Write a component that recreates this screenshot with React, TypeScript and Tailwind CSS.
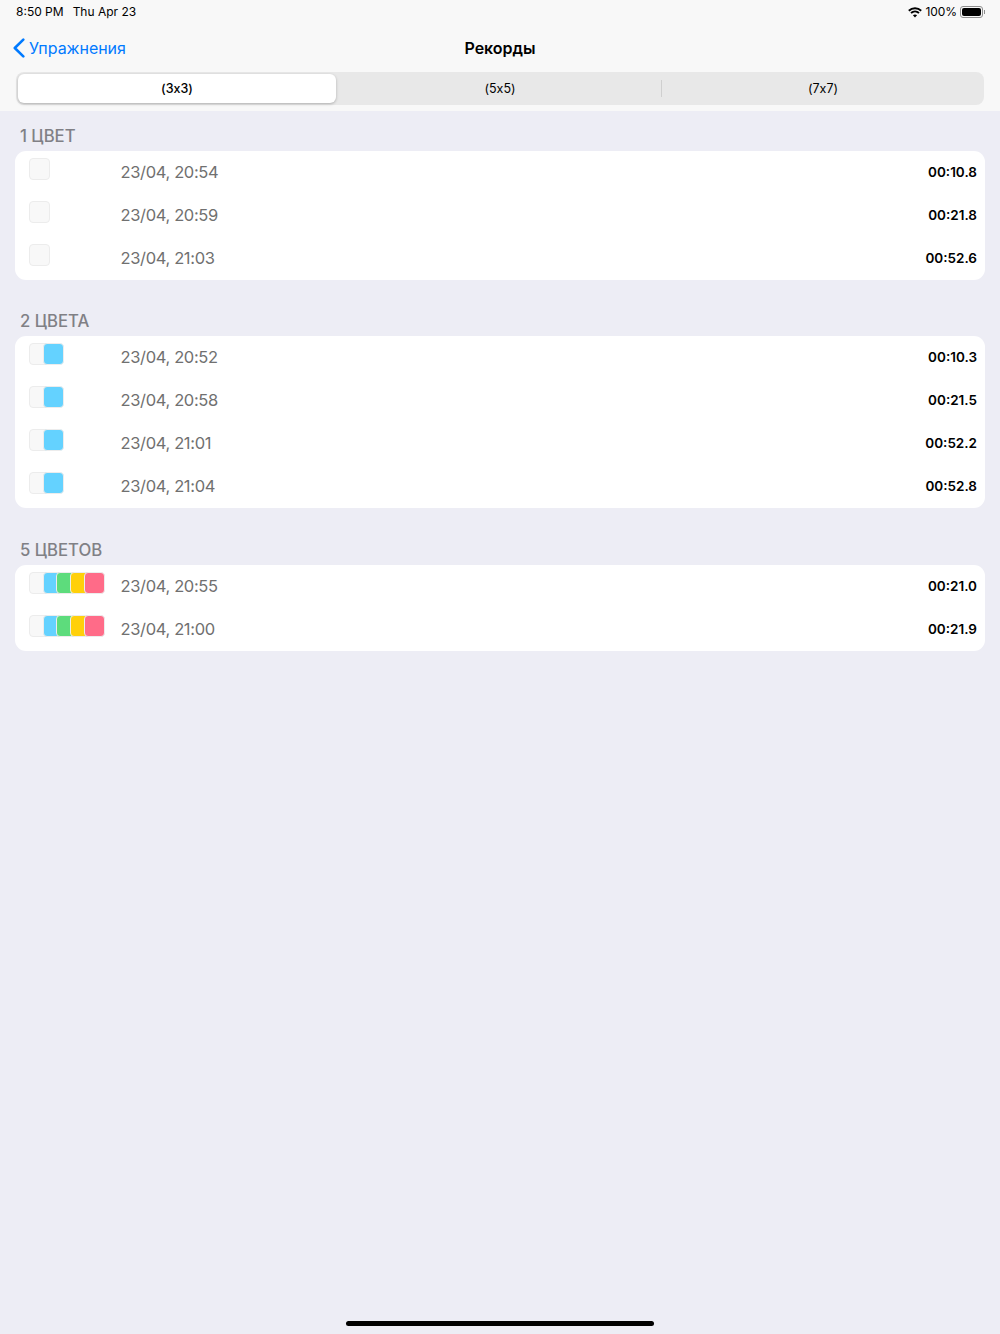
import React from 'react';

const GRAY = 'bg-[#f8f8f8]';
const BLUE = 'bg-[#64d2ff]';
const GREEN = 'bg-[#5ddc7c]';
const YELLOW = 'bg-[#ffd00a]';
const PINK = 'bg-[#ff6b88]';

interface Row {
    date: string;
    time: string;
}

interface Section {
    title: string;
    colors: string[];
    rows: Row[];
}

const sections: Section[] = [
    {
        title: '1 ЦВЕТ',
        colors: [GRAY],
        rows: [
            { date: '23/04, 20:54', time: '00:10.8' },
            { date: '23/04, 20:59', time: '00:21.8' },
            { date: '23/04, 21:03', time: '00:52.6' }
        ]
    },
    {
        title: '2 ЦВЕТА',
        colors: [GRAY, BLUE],
        rows: [
            { date: '23/04, 20:52', time: '00:10.3' },
            { date: '23/04, 20:58', time: '00:21.5' },
            { date: '23/04, 21:01', time: '00:52.2' },
            { date: '23/04, 21:04', time: '00:52.8' }
        ]
    },
    {
        title: '5 ЦВЕТОВ',
        colors: [GRAY, BLUE, GREEN, YELLOW, PINK],
        rows: [
            { date: '23/04, 20:55', time: '00:21.0' },
            { date: '23/04, 21:00', time: '00:21.9' }
        ]
    }
];

const Swatches: React.FC<{ colors: string[] }> = ({ colors }) => (
    <div className="flex w-[91.5px] shrink-0 pt-[7px] self-start">
        {colors.map((color, i) => (
            <div
                key={i}
                className={`w-[21px] h-[22px] shrink-0 rounded-[4px] border border-[#ececec] first:ml-0 -ml-[7.3px] ${color}`}
            />
        ))}
    </div>
);

const WifiIcon = () => (
    <svg width="14" height="11" viewBox="0 0 14 11" fill="none" stroke="#000" strokeWidth="1.9">
        <path d="M0.8 3.7C4.3 0.4 9.7 0.4 13.2 3.7" />
        <path d="M3 6C5.3 3.9 8.7 3.9 11 6" />
        <path d="M7 10.6L4.9 8.2C6.1 7.2 7.9 7.2 9.1 8.2Z" fill="#000" stroke="none" />
    </svg>
);

const BatteryIcon = () => (
    <div className="flex items-center">
        <div className="w-[23px] h-[12px] rounded-[3px] border border-[#8e8e8e] p-[1px]">
            <div className="w-full h-full rounded-[2px] bg-black" />
        </div>
        <div className="w-[1px] h-[4px] bg-[#8e8e8e] ml-[1px]" />
    </div>
);

const StatusBar = () => (
    <div className="h-6 flex items-center justify-between pl-4 pr-[15px] text-[12px] leading-none text-black">
        <div className="flex gap-[9px]">
            <span>8:50 PM</span>
            <span>Thu Apr 23</span>
        </div>
        <div className="flex items-center gap-[3px]">
            <WifiIcon />
            <span className="tracking-[-0.05px]">100%</span>
            <BatteryIcon />
        </div>
    </div>
);

const NavBar = () => (
    <div className="relative h-12 flex items-center justify-center">
        <div className="absolute left-[13px] top-[14px] flex items-center gap-[4px] text-[#007aff]">
            <svg width="12" height="20" viewBox="0 0 12 20" fill="none" stroke="#007aff" strokeWidth="2.6" strokeLinecap="round" strokeLinejoin="round">
                <path d="M10.3 1.6L1.8 10L10.3 18.4" />
            </svg>
            <span className="text-[16px] leading-5 tracking-[-0.05px]">Упражнения</span>
        </div>
        <span className="text-[16px] font-semibold text-black">Рекорды</span>
    </div>
);

const SegmentedControl = () => (
    <div className="mx-4 h-[33px] rounded-[8px] bg-[#e8e8e8] flex items-center p-[2px] text-[12.5px] leading-5 text-black [font-feature-settings:'calt'_0]">
        <div className="w-[318px] h-[29px] rounded-[6px] bg-white shadow-[0_1px_3px_rgba(0,0,0,0.25)] flex items-center justify-center pt-px font-medium">
            (3x3)
        </div>
        <div className="flex-1 flex items-center justify-center pl-[3px] pt-px">(5x5)</div>
        <div className="w-px h-[17px] bg-[#cfcfcf]" />
        <div className="w-[320px] flex items-center justify-center pl-[2px] pt-px">(7x7)</div>
    </div>
);

const RecordSection: React.FC<{ section: Section }> = ({ section }) => (
    <div className="last:mt-px">
        <div className="h-[40px] pl-5 flex items-end pb-[5px] text-[16.7px] leading-5 font-medium text-[#808085]">
            {section.title}
        </div>
        <div className="mx-[15px] rounded-[11px] bg-white">
            {section.rows.map(row => (
                <div key={row.date} className="h-[43px] flex items-center pl-[14px] pr-2">
                    <Swatches colors={section.colors} />
                    <span className="flex-1 text-[16.5px] tracking-[-0.35px] text-[#707070]">{row.date}</span>
                    <span className="text-[13.5px] font-semibold text-black">{row.time}</span>
                </div>
            ))}
        </div>
    </div>
);

export default function App() {
    return (
        <div className="relative w-[1000px] h-[1334px] overflow-hidden bg-[#ededf5] font-['Inter','Liberation_Sans',sans-serif]">
            <div className={`h-[111px] ${GRAY}`}>
                <StatusBar />
                <NavBar />
                <SegmentedControl />
            </div>
            <div className="flex flex-col gap-[16px]">
                {sections.map(section => (
                    <RecordSection key={section.title} section={section} />
                ))}
            </div>
            <div className="absolute left-[346px] bottom-[8px] w-[308px] h-[5px] rounded-full bg-black" />
        </div>
    );
}
